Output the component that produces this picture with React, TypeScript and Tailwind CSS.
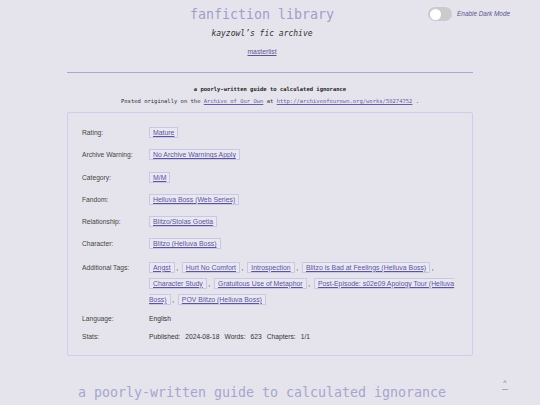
import React from "react";

const mono = "font-['DejaVu_Sans_Mono',monospace]";
const sans = "font-['Liberation_Sans',Arial,sans-serif]";

function Tag({ children }: { children: React.ReactNode }) {
  return (
    <a className="border border-[#cac6e6] bg-[#e9e8f1] px-[3px] py-[1px] text-[6.9px] text-[#5b55a0] underline">
      {children}
    </a>
  );
}

function Row({
  label,
  children,
  tall = true,
  extra = "",
}: {
  label: string;
  children: React.ReactNode;
  tall?: boolean;
  extra?: string;
}) {
  const lh = tall ? "leading-[16px]" : "leading-[12px]";
  return (
    <div className={`flex ${lh} ${extra}`}>
      <div className="w-[67px] shrink-0 text-[#444]">{label}</div>
      <div className="flex-1 text-[#333]">{children}</div>
    </div>
  );
}

const extraTags = [
  "Angst",
  "Hurt No Comfort",
  "Introspection",
  "Blitzo is Bad at Feelings (Helluva Boss)",
  "Character Study",
  "Gratuitous Use of Metaphor",
  "Post-Episode: s02e09 Apology Tour (Helluva Boss)",
  "POV Blitzo (Helluva Boss)",
];

export default function App() {
  return (
    <div className="relative min-h-[405px] overflow-hidden bg-[#e5e4ec]">
      <div className="absolute right-[30px] top-[7px] flex items-center gap-[5px]">
        <div className="flex h-[14px] w-[24px] items-center rounded-full bg-[#cbcbcb] pl-[1.5px]">
          <div className="h-[11px] w-[11px] rounded-full bg-white" />
        </div>
        <span className={`${sans} text-[6.4px] italic text-[#5a5490]`}>Enable Dark Mode</span>
      </div>

      <h1 className={`${mono} pt-[7px] pr-[16px] text-center text-[13.3px] leading-[16px] font-normal text-[#a19dcb]`}>
        fanfiction library
      </h1>
      <p className={`${mono} mt-[6px] pr-[16px] text-center text-[8px] leading-[10px] italic text-[#333]`}>
        kayzowl’s fic archive
      </p>
      <p className={`${sans} mt-[9px] pr-[16px] text-center text-[6.8px] leading-[8px]`}>
        <a className="text-[#5d5694] underline">masterlist</a>
      </p>
      <div className="mx-auto mt-[16px] h-px w-[406px] bg-[#aaa6cf]" />

      <p className={`${mono} mt-[12px] text-center text-[5.5px] leading-[8px] font-bold text-[#222]`}>
        a poorly-written guide to calculated ignorance
      </p>
      <p className={`${mono} mt-[4px] text-center text-[5.5px] leading-[8px] text-[#333]`}>
        Posted originally on the <a className="text-[#655fa8] underline">Archive of Our Own</a> at{" "}
        <a className="text-[#655fa8] underline">http://archiveofourown.org/works/58274752</a> .
      </p>

      <div
        className={`${sans} mx-auto mt-[7px] flex w-[406px] flex-col gap-[6.3px] rounded-[2px] border border-[#d0cce9] px-[14px] pb-[12px] pt-[12px] text-[6.7px]`}
      >
        <Row label="Rating:">
          <Tag>Mature</Tag>
        </Row>
        <Row label="Archive Warning:">
          <Tag>No Archive Warnings Apply</Tag>
        </Row>
        <Row label="Category:">
          <Tag>M/M</Tag>
        </Row>
        <Row label="Fandom:">
          <Tag>Helluva Boss (Web Series)</Tag>
        </Row>
        <Row label="Relationship:">
          <Tag>Blitzo/Stolas Goetia</Tag>
        </Row>
        <Row label="Character:">
          <Tag>Blitzo (Helluva Boss)</Tag>
        </Row>
        <Row label="Additional Tags:" extra="mt-[1px]">
          {extraTags.map((t, i) => (
            <React.Fragment key={t}>
              <Tag>{t}</Tag>
              {i < extraTags.length - 1 && <span className="ml-[1.5px] mr-[2px]">,</span>}{" "}
            </React.Fragment>
          ))}
        </Row>
        <Row label="Language:" tall={false} extra="-mt-[1px]">
          English
        </Row>
        <Row label="Stats:" tall={false}>
          <span className="mr-[5px]">Published:</span>
          <span className="mr-[5px]">2024-08-18</span>
          <span className="mr-[5px]">Words:</span>
          <span className="mr-[5px]">623</span>
          <span className="mr-[5px]">Chapters:</span>
          <span>1/1</span>
        </Row>
      </div>

      <h2 className={`${mono} mt-[29px] pr-[16px] text-center text-[13.3px] leading-[16px] font-normal text-[#a7a4cf]`}>
        a poorly-written guide to calculated ignorance
      </h2>

      <a className={`${sans} absolute left-[502px] top-[379px] flex flex-col items-center text-[7px] leading-[8px] text-[#6b66a8]`}>
        <span>^</span>
        <span className="mt-[2px] h-px w-[6px] bg-[#a9a6cc]" />
      </a>
    </div>
  );
}
